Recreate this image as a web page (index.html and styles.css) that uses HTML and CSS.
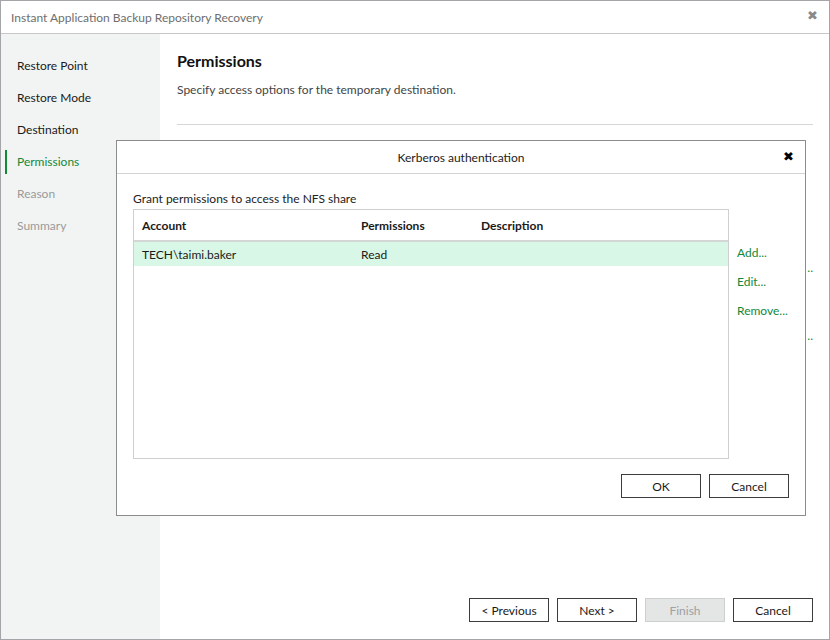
FILE: index.html
```html
<!DOCTYPE html>
<html lang="en">
<head>
    <meta charset="UTF-8">
    <title>Instant Application Backup Repository Recovery</title>
    <link rel="stylesheet" href="styles.css">
</head>
<body>

<div class="window">
    <div class="titlebar">
        <span class="title">Instant Application Backup Repository Recovery</span>
        <span class="close close-grey">&#x2716;</span>
    </div>

    <div class="wizard">
        <ul class="steps">
            <li>Restore Point</li>
            <li>Restore Mode</li>
            <li>Destination</li>
            <li class="current">Permissions</li>
            <li class="disabled">Reason</li>
            <li class="disabled">Summary</li>
        </ul>

        <div class="page">
            <h2>Permissions</h2>
            <p class="hint">Specify access options for the temporary destination.</p>
            <div class="rule"></div>

            <div class="page-body">
                <a class="link back-link first">..</a>
                <a class="link back-link second">..</a>
            </div>

            <div class="nav-buttons">
                <button>&lt; Previous</button>
                <button>Next &gt;</button>
                <button disabled>Finish</button>
                <button>Cancel</button>
            </div>
        </div>
    </div>

    <!-- modal over the wizard -->
    <div class="dialog">
        <div class="dialog-head">
            <span>Kerberos authentication</span>
            <span class="close close-black">&#x2716;</span>
        </div>
        <div class="dialog-body">
            <div class="caption">Grant permissions to access the NFS share</div>
            <div class="grid-row">
                <div class="list">
                    <div class="list-head">
                        <span class="col-account">Account</span>
                        <span class="col-perm">Permissions</span>
                        <span class="col-desc">Description</span>
                    </div>
                    <div class="list-item selected">
                        <span class="col-account">TECH\taimi.baker</span>
                        <span class="col-perm">Read</span>
                        <span class="col-desc"></span>
                    </div>
                </div>
                <div class="actions">
                    <a class="link">Add...</a>
                    <a class="link">Edit...</a>
                    <a class="link">Remove...</a>
                </div>
            </div>
            <div class="dialog-buttons">
                <button>OK</button>
                <button>Cancel</button>
            </div>
        </div>
    </div>
</div>

</body>
</html>
```

FILE: styles.css
```css
body {
    margin: 0;
    font-family: Lato, "Noto Sans", sans-serif;
    font-size: 12px;
    color: #1a1a1a;
}
.window {
    position: relative;
    width: 830px;
    height: 640px;
    box-sizing: border-box;
    border: 1px solid #a3a5a8;
    display: flex;
    flex-direction: column;
    background: #fff;
}
.titlebar {
    height: 32px;
    border-bottom: 1px solid #c8c8c8;
    display: flex;
    align-items: center;
    justify-content: space-between;
    padding: 0 11px 0 10px;
}
.title {
    color: #6e6e6e;
}
.close {
    font-size: 13px;
    line-height: 1;
}
.close-grey {
    color: #8a8a8a;
    margin-top: -3px;
}
.close-black {
    color: #000;
    font-size: 13px;
}
.wizard {
    flex: 1;
    display: flex;
}
.steps {
    width: 159px;
    margin: 0;
    padding: 16px 0 0;
    list-style: none;
    background: #f2f4f3;
}
.steps li {
    height: 32px;
    line-height: 32px;
    padding-left: 16px;
    position: relative;
}
.steps li.current {
    color: #13883b;
}
.steps li.current::before {
    content: "";
    position: absolute;
    left: 4px;
    top: 4px;
    width: 2px;
    height: 24px;
    background: #13883b;
}
.steps li.disabled {
    color: #9a9a9a;
}
.page {
    flex: 1;
    padding: 0 16px 0 17px;
    display: flex;
    flex-direction: column;
}
h2 {
    margin: 16px 0 0;
    font-size: 16px;
    font-weight: 700;
    line-height: 22px;
    color: #111;
}
.hint {
    margin: 9px 0 0;
    line-height: 18px;
    color: #444;
}
.rule {
    margin-top: 25px;
    height: 1px;
    background: #d6d6d6;
}
.page-body {
    flex: 1;
    display: flex;
    flex-direction: column;
    align-items: flex-end;
    padding-top: 134px;
}
.back-link.second {
    margin-top: 50px;
}
.link {
    color: #13883b;
    line-height: 18px;
}
.nav-buttons {
    display: flex;
    justify-content: flex-end;
    gap: 8px;
    padding-bottom: 17px;
}
button {
    width: 80px;
    height: 24px;
    font-family: inherit;
    font-size: 12px;
    color: #1a1a1a;
    background: #fff;
    border: 1px solid #3c3c3c;
    padding: 0;
}
button:disabled {
    background: #e4e6e6;
    border-color: #cdcfcf;
    color: #a0a0a0;
}
.dialog {
    position: absolute;
    left: 115px;
    top: 139px;
    width: 690px;
    height: 376px;
    box-sizing: border-box;
    border: 1px solid #8c8c8c;
    background: #fff;
    display: flex;
    flex-direction: column;
}
.dialog-head {
    height: 32px;
    border-bottom: 1px solid #d4d4d4;
    display: flex;
    align-items: center;
    justify-content: center;
    position: relative;
    color: #222;
}
.dialog-head .close {
    position: absolute;
    right: 11px;
    top: 9px;
}
.dialog-body {
    flex: 1;
    padding: 16px 16px 17px 16px;
    display: flex;
    flex-direction: column;
}
.caption {
    line-height: 18px;
    color: #222;
}
.grid-row {
    display: flex;
    flex: 1;
    margin-top: 1px;
}
.list {
    flex-shrink: 0;
    width: 596px;
    height: 250px;
    box-sizing: border-box;
    border: 1px solid #cfcfcf;
}
.list-head,
.list-item {
    display: flex;
}
.list-head {
    height: 30px;
    align-items: center;
    border-bottom: 2px solid #d4d6d6;
    font-weight: 700;
}
.list-item {
    height: 24px;
    align-items: center;
}
.list-item.selected {
    background: #d8f7e6;
}
.col-account {
    width: 219px;
    padding-left: 8px;
}
.col-perm {
    width: 120px;
}
.actions {
    display: flex;
    flex-direction: column;
    padding: 35px 0 0 8px;
    gap: 11px;
}
.dialog-buttons {
    display: flex;
    justify-content: flex-end;
    gap: 8px;
}
```
